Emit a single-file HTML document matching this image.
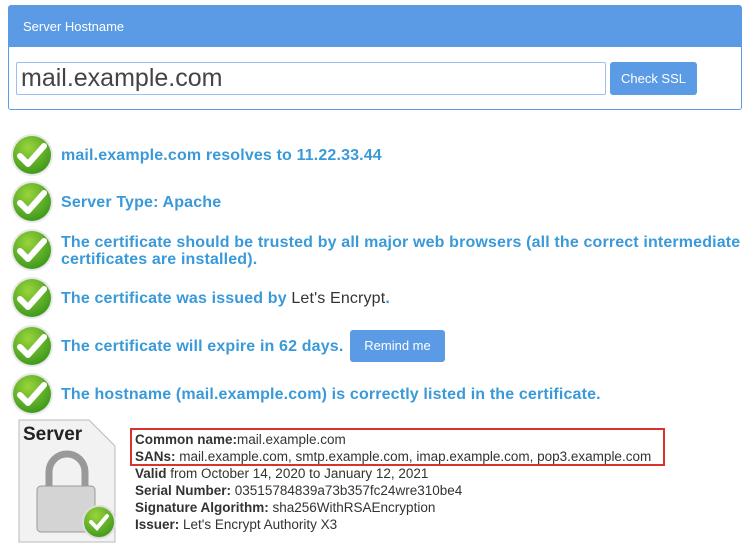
<!DOCTYPE html>
<html><head><meta charset="utf-8"><style>
body{margin:0;width:750px;height:548px;background:#fff;font-family:"Liberation Sans",sans-serif;position:relative;overflow:hidden}
.panel{position:absolute;left:8px;top:5px;width:734px;height:105px;border:1px solid #5b9be6;border-radius:3px;box-sizing:border-box}
.hd{background:#5b9be6;height:41px;color:#fff;font-size:13px;line-height:41px;padding-left:14px}
.inp{position:absolute;left:7px;top:56px;width:590px;height:33px;border:1px solid #9cc0ee;box-sizing:border-box;font-size:25px;color:#444;line-height:31px;padding-left:4px;border-radius:2px}
.btn{position:absolute;background:#5b9be6;color:#fff;font-size:13px;text-align:center;border-radius:3px}
.row{position:absolute;left:61px;color:#3a9ad9;font-weight:bold;font-size:16px;letter-spacing:0.15px;line-height:17px}
.ck{position:absolute;left:10px;width:44px;height:44px}
.dt{position:absolute;left:135px;font-size:13.5px;color:#333;line-height:17px}
.dt b{font-weight:bold}
</style></head><body>
<div class="panel"><div class="hd">Server Hostname</div>
<div class="inp">mail.example.com</div>
<div class="btn" style="left:601px;top:56px;width:87px;height:33px;line-height:33px">Check SSL</div></div>

<svg width="0" height="0" style="position:absolute"><defs>
<radialGradient id="g" cx="40%" cy="30%" r="70%"><stop offset="0" stop-color="#9bd43c"/><stop offset="1" stop-color="#3f9a1c"/></radialGradient>
<symbol id="c" viewBox="0 0 44 44"><circle cx="22" cy="22" r="21" fill="#e8e8e8"/><circle cx="22" cy="22" r="19" fill="url(#g)"/><path d="M10 23l8 8 16-18" stroke="#fff" stroke-width="6" fill="none" stroke-linecap="round" stroke-linejoin="round"/></symbol></defs></svg>

<svg class="ck" style="top:133px"><use href="#c"/></svg>
<div class="row" style="top:147px">mail.example.com resolves to 11.22.33.44</div>
<svg class="ck" style="top:180px"><use href="#c"/></svg>
<div class="row" style="top:194px">Server Type: Apache</div>
<svg class="ck" style="top:228px"><use href="#c"/></svg>
<div class="row" style="top:234px;width:689px">The certificate should be trusted by all major web browsers (all the correct intermediate certificates are installed).</div>
<svg class="ck" style="top:276px"><use href="#c"/></svg>
<div class="row" style="top:290px">The certificate was issued by <span style="color:#333;font-weight:normal">Let's Encrypt</span>.</div>
<svg class="ck" style="top:324px"><use href="#c"/></svg>
<div class="row" style="top:338px">The certificate will expire in 62 days.</div>
<div class="btn" style="left:350px;top:330px;width:95px;height:32px;line-height:32px">Remind me</div>
<svg class="ck" style="top:372px"><use href="#c"/></svg>
<div class="row" style="top:386px">The hostname (mail.example.com) is correctly listed in the certificate.</div>

<svg style="position:absolute;left:15px;top:418px" width="104" height="128" viewBox="0 0 104 128">
<path d="M4 2h70l26 26v96H4z" fill="#f2f2f2" stroke="#bbb"/>
<text x="8" y="22" font-family="Liberation Sans" font-weight="bold" font-size="19" fill="#222">Server</text>
<path d="M34 70v-16a18 18 0 0 1 36 0v16" stroke="#999" stroke-width="7" fill="none"/>
<rect x="22" y="68" width="58" height="46" rx="4" fill="#d4d4d4" stroke="#999"/>
<circle cx="84" cy="104" r="16" fill="url(#g)" stroke="#ddd" stroke-width="2"/>
<path d="M76 104l6 6 10-12" stroke="#fff" stroke-width="4" fill="none" stroke-linecap="round"/>
</svg>
<div style="position:absolute;left:130px;top:428px;width:531px;height:34px;border:2px solid #d9342b"></div>
<div class="dt" style="top:431px"><b>Common name:</b>mail.example.com<br><b>SANs:</b> mail.example.com, smtp.example.com, imap.example.com, pop3.example.com<br><b>Valid</b> from October 14, 2020 to January 12, 2021<br><b>Serial Number:</b> 03515784839a73b357fc24wre310be4<br><b>Signature Algorithm:</b> sha256WithRSAEncryption<br><b>Issuer:</b> Let's Encrypt Authority X3</div>
</body></html>
